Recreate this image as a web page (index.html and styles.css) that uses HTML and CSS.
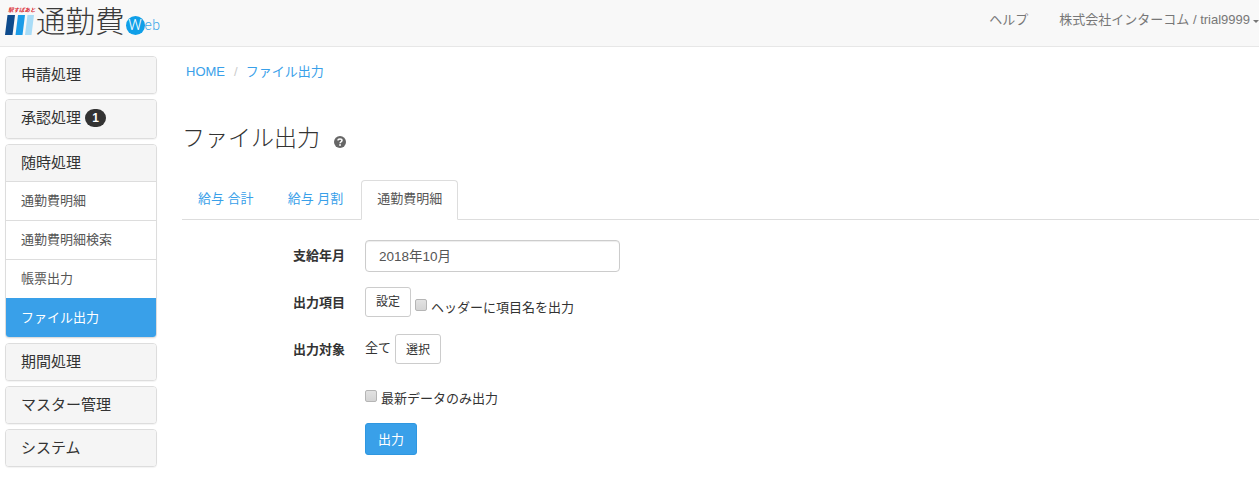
FILE: index.html
```html
<!DOCTYPE html>
<html lang="ja">
<head>
<meta charset="utf-8">
<title>ファイル出力</title>
<link rel="stylesheet" href="styles.css">
</head>
<body>
<header class="navbar">
  <a class="brand">
    <span class="mark">
      <span class="mark-text">駅すぱあと</span>
      <svg class="mark-bars" width="29" height="20" viewBox="0 0 29 20">
        <polygon points="2.5,0 10,0 7.5,20 0,20" fill="#0d4a8c"/>
        <polygon points="13,0 20,0 17.5,20 10.5,20" fill="#1b9ce8"/>
        <polygon points="22.5,0 29,0 26.5,20 20,20" fill="#a9dcf7"/>
      </svg>
    </span>
    <span class="brand-name">通勤費</span>
    <span class="web"><span class="web-w">W</span><span class="web-eb">eb</span></span>
  </a>
  <nav class="nav-right">
    <a class="nav-link">ヘルプ</a>
    <a class="nav-user">株式会社インターコム / trial9999<span class="caret"></span></a>
  </nav>
</header>
<div class="layout">
  <aside class="sidebar">
    <div class="panel"><div class="panel-head">申請処理</div></div>
    <div class="panel panel-tall"><div class="panel-head">承認処理 <span class="badge">1</span></div></div>
    <div class="panel">
      <div class="panel-head">随時処理</div>
      <a class="sub">通勤費明細</a>
      <a class="sub">通勤費明細検索</a>
      <a class="sub">帳票出力</a>
      <a class="sub active">ファイル出力</a>
    </div>
    <div class="panel"><div class="panel-head">期間処理</div></div>
    <div class="panel"><div class="panel-head">マスター管理</div></div>
    <div class="panel"><div class="panel-head">システム</div></div>
  </aside>
  <main class="main">
    <ol class="breadcrumb">
      <li><a>HOME</a></li>
      <li class="sep">/</li>
      <li><a>ファイル出力</a></li>
    </ol>
    <h1 class="title">ファイル出力
      <svg class="help" width="12" height="12" viewBox="0 0 12 12">
        <circle cx="6" cy="6" r="6" fill="#666"/>
        <path d="M4 4.6C4 3.5 4.9 3 6 3s2 .6 2 1.6c0 1.4-1.9 1.3-1.9 2.6" fill="none" stroke="#fff" stroke-width="1.5"/>
        <rect x="5.2" y="8.2" width="1.7" height="1.6" fill="#fff"/>
      </svg>
    </h1>
    <ul class="tabs">
      <li class="tab">給与 合計</li>
      <li class="tab">給与 月割</li>
      <li class="tab tab-active">通勤費明細</li>
    </ul>
    <form class="form">
      <div class="row row-month">
        <label class="label">支給年月</label>
        <div class="field"><input class="input" type="text" value="2018年10月"></div>
      </div>
      <div class="row row-items">
        <label class="label">出力項目</label>
        <div class="field">
          <button class="btn btn-set" type="button">設定</button>
          <span class="check check-inline"><input type="checkbox" class="cb"><span class="check-text">ヘッダーに項目名を出力</span></span>
        </div>
      </div>
      <div class="row row-target">
        <label class="label">出力対象</label>
        <div class="field"><span class="all">全て</span><button class="btn btn-pick" type="button">選択</button></div>
      </div>
      <div class="row row-latest">
        <span class="label"></span>
        <div class="field"><span class="check"><input type="checkbox" class="cb"><span class="check-text">最新データのみ出力</span></span></div>
      </div>
      <div class="row">
        <span class="label"></span>
        <div class="field"><button class="btn btn-primary" type="button">出力</button></div>
      </div>
    </form>
  </main>
</div>
</body>
</html>
```
FILE: styles.css
```css
* { box-sizing: border-box; }
html, body { margin: 0; padding: 0; }
body {
  font-family: "Liberation Sans", "Noto Sans CJK JP", sans-serif;
  font-size: 13px;
  line-height: 1.43;
  color: #333;
  background: #fff;
  height: 477px;
  overflow: hidden;
}
.navbar {
  height: 47px;
  background: #f8f8f8;
  border-bottom: 1px solid #e7e7e7;
  display: flex;
  justify-content: space-between;
  align-items: flex-start;
}
.brand { display: flex; align-items: flex-start; padding-left: 5px; }
.mark { width: 31px; height: 46px; position: relative; display: block; }
.mark-text {
  position: absolute;
  left: 3px;
  top: 7px;
  font-size: 5.5px;
  line-height: 7px;
  font-weight: bold;
  font-style: italic;
  color: #d8232a;
  white-space: nowrap;
}
.mark-bars { position: absolute; left: 0; top: 15px; }
.brand-name {
  font-size: 29.5px;
  line-height: 44px;
  font-weight: 300;
  color: #3a3a3a;
  white-space: nowrap;
}
.web {
  display: flex;
  align-items: center;
  margin-top: 16px;
  margin-left: 1px;
  height: 19px;
  font-family: Roboto, "Liberation Sans", sans-serif;
  font-weight: 300;
}
.web-w {
  width: 19px;
  height: 19px;
  border-radius: 50%;
  background: #0f9fe8;
  color: #fff;
  font-size: 15px;
  line-height: 19px;
  text-align: center;
}
.web-eb { font-size: 14px; letter-spacing: .5px; color: #3aa7e8; line-height: 19px; }
.nav-right { display: flex; color: #777; padding-top: 11px; line-height: 18px; }
.nav-link { margin-right: 31px; }
.nav-user { display: flex; align-items: center; white-space: nowrap; }
.caret {
  display: inline-block;
  width: 0;
  height: 0;
  margin: 2px 0 0 3px;
  border-top: 3px solid #777;
  border-left: 3px solid transparent;
  border-right: 3px solid transparent;
}
.layout { display: flex; align-items: flex-start; }
.sidebar { width: 182px; padding: 9px 0 0 5px; flex: none; }
.panel {
  width: 152px;
  margin-bottom: 5px;
  border: 1px solid #ddd;
  border-radius: 4px;
  background: #fff;
  box-shadow: 0 1px 1px rgba(0, 0, 0, .05);
  overflow: hidden;
}
.panel-head {
  height: 36px;
  padding: 0 15px;
  background: #f5f5f5;
  font-size: 15px;
  line-height: 35px;
  color: #333;
  white-space: nowrap;
}
.panel-tall .panel-head { height: 38px; }
.sub {
  display: block;
  height: 39px;
  padding: 0 15px;
  border-top: 1px solid #ddd;
  line-height: 37px;
  color: #555;
}
.sub.active {
  border-top-color: #39a0e9;
  background: #39a0e9;
  color: #fff;
}
.badge {
  display: inline-block;
  min-width: 21px;
  height: 18px;
  padding: 0 7px;
  border-radius: 9px;
  background: #333;
  color: #fff;
  font-size: 12px;
  font-weight: bold;
  line-height: 18px;
  text-align: center;
  vertical-align: 1px;
}
.main { flex: 1; min-width: 0; }
.breadcrumb {
  display: flex;
  gap: 8px;
  margin: 0;
  padding: 16px 4px 0;
  list-style: none;
  line-height: 18px;
  color: #39a0e9;
}
.breadcrumb .sep { color: #ccc; margin-left: 1px; }
.title {
  margin: 42px 0 0;
  font-size: 23px;
  font-weight: 300;
  line-height: 30px;
  color: #333;
}
.help { margin-left: 8px; vertical-align: -2px; }
.tabs {
  display: flex;
  margin: 27px 0 0;
  padding: 0;
  list-style: none;
  border-bottom: 1px solid #ddd;
  height: 40px;
}
.tab {
  padding: 10px 16px 0;
  margin-right: 2px;
  color: #39a0e9;
  line-height: 18px;
  height: 39px;
}
.tab-active {
  height: 40px;
  color: #555;
  background: #fff;
  border: 1px solid #ddd;
  border-bottom-color: #fff;
  border-radius: 4px 4px 0 0;
  padding: 9px 15px 0;
  margin-right: 0;
}
.form { padding-top: 20px; }
.row { display: flex; align-items: flex-start; }
.label {
  width: 163px;
  flex: none;
  padding-top: 7px;
  font-weight: bold;
  text-align: right;
  line-height: 18px;
}
.field { margin-left: 20px; display: flex; align-items: flex-start; }
.row-month { height: 47px; }
.row-items { height: 47px; }
.row-target { height: 54px; }
.row-latest { height: 35px; }
.input {
  width: 255px;
  height: 32px;
  padding: 0 13px 2px;
  border: 1px solid #ccc;
  border-radius: 4px;
  font: inherit;
  font-size: 13.5px;
  color: #555;
  box-shadow: inset 0 1px 1px rgba(0, 0, 0, .075);
}
.btn {
  height: 30px;
  padding: 0 10px;
  border: 1px solid #ccc;
  border-radius: 3px;
  background: #fff;
  color: #333;
  font: inherit;
  font-size: 12px;
}
.btn-set { padding-top: 2px; }
.btn-pick { padding-top: 4px; }
.btn-primary {
  height: 32px;
  padding: 2px 12px 0;
  background: #39a0e9;
  border-color: #2f97e0;
  color: #fff;
  font-size: 13px;
}
.all { margin-right: 4px; padding-top: 5px; line-height: 18px; }
.check { display: flex; align-items: flex-start; line-height: 18px; }
.check-inline { margin: 10px 0 0 4px; }
.check-text { margin-top: 2px; }
.cb {
  appearance: none;
  width: 12px;
  height: 12px;
  margin: 2px 4px 0 0;
  flex: none;
  border: 1px solid #b5b5b5;
  border-radius: 2px;
  background: linear-gradient(#e2e2e2, #d4d4d4);
}
```
